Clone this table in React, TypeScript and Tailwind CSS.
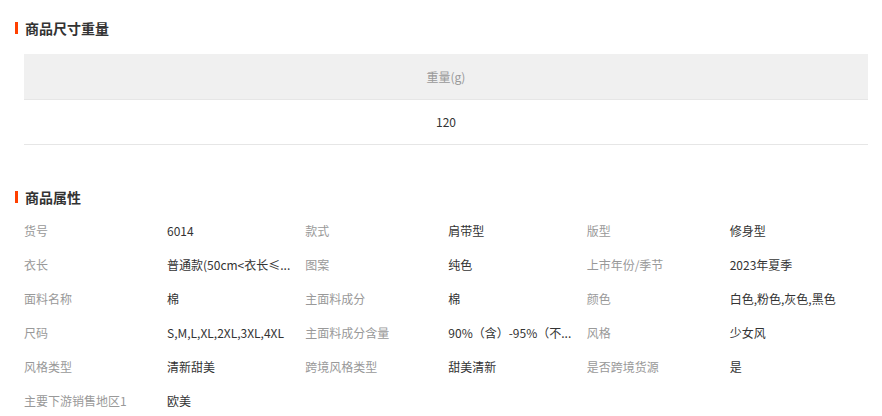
import React from "react";

type AttrT = { label: string; value: string };

const attrs: AttrT[] = [
  { label: "货号", value: "6014" },
  { label: "款式", value: "肩带型" },
  { label: "版型", value: "修身型" },
  { label: "衣长", value: "普通款(50cm<衣长≤..." },
  { label: "图案", value: "纯色" },
  { label: "上市年份/季节", value: "2023年夏季" },
  { label: "面料名称", value: "棉" },
  { label: "主面料成分", value: "棉" },
  { label: "颜色", value: "白色,粉色,灰色,黑色" },
  { label: "尺码", value: "S,M,L,XL,2XL,3XL,4XL" },
  { label: "主面料成分含量", value: "90%（含）-95%（不..." },
  { label: "风格", value: "少女风" },
  { label: "风格类型", value: "清新甜美" },
  { label: "跨境风格类型", value: "甜美清新" },
  { label: "是否跨境货源", value: "是" },
  { label: "主要下游销售地区1", value: "欧美" },
];

const font = { fontFamily: '"Noto Sans CJK SC", "Noto Sans", sans-serif' };

const SectionTitle = ({ title }: { title: string }) => (
  <div className="flex items-center h-[14px]">
    <span className="w-[3px] h-[12px] bg-[#ff4000]" />
    <span className="ml-[7px] text-[14px] leading-[14px] font-bold text-[#333]">{title}</span>
  </div>
);

const App = () => {
  return (
    <div className="w-[882px] h-[416px] bg-white overflow-hidden pl-[15px] pr-[14px] pt-[21px]" style={font}>
      <SectionTitle title="商品尺寸重量" />
      <div className="ml-[9px] mt-[19px]">
        <div className="h-[46px] bg-[#f0f0f0] border-b border-[#e6e6e6] flex items-center justify-center text-[12px] text-[#999]">
          重量(g)
        </div>
        <div className="h-[45px] border-b border-[#e6e6e6] flex items-center justify-center text-[12px] text-[#333]">
          120
        </div>
      </div>
      <div className="mt-[45px]">
        <SectionTitle title="商品属性" />
      </div>
      <div className="ml-[9px] mt-[10px] grid grid-cols-3">
        {attrs.map((a) => (
          <div key={a.label} className="flex h-[34px] items-center text-[12px]">
            <span className="w-[143px] text-[#999] whitespace-nowrap">{a.label}</span>
            <span className="text-[#333] whitespace-nowrap">{a.value}</span>
          </div>
        ))}
      </div>
    </div>
  );
};

export default App;
